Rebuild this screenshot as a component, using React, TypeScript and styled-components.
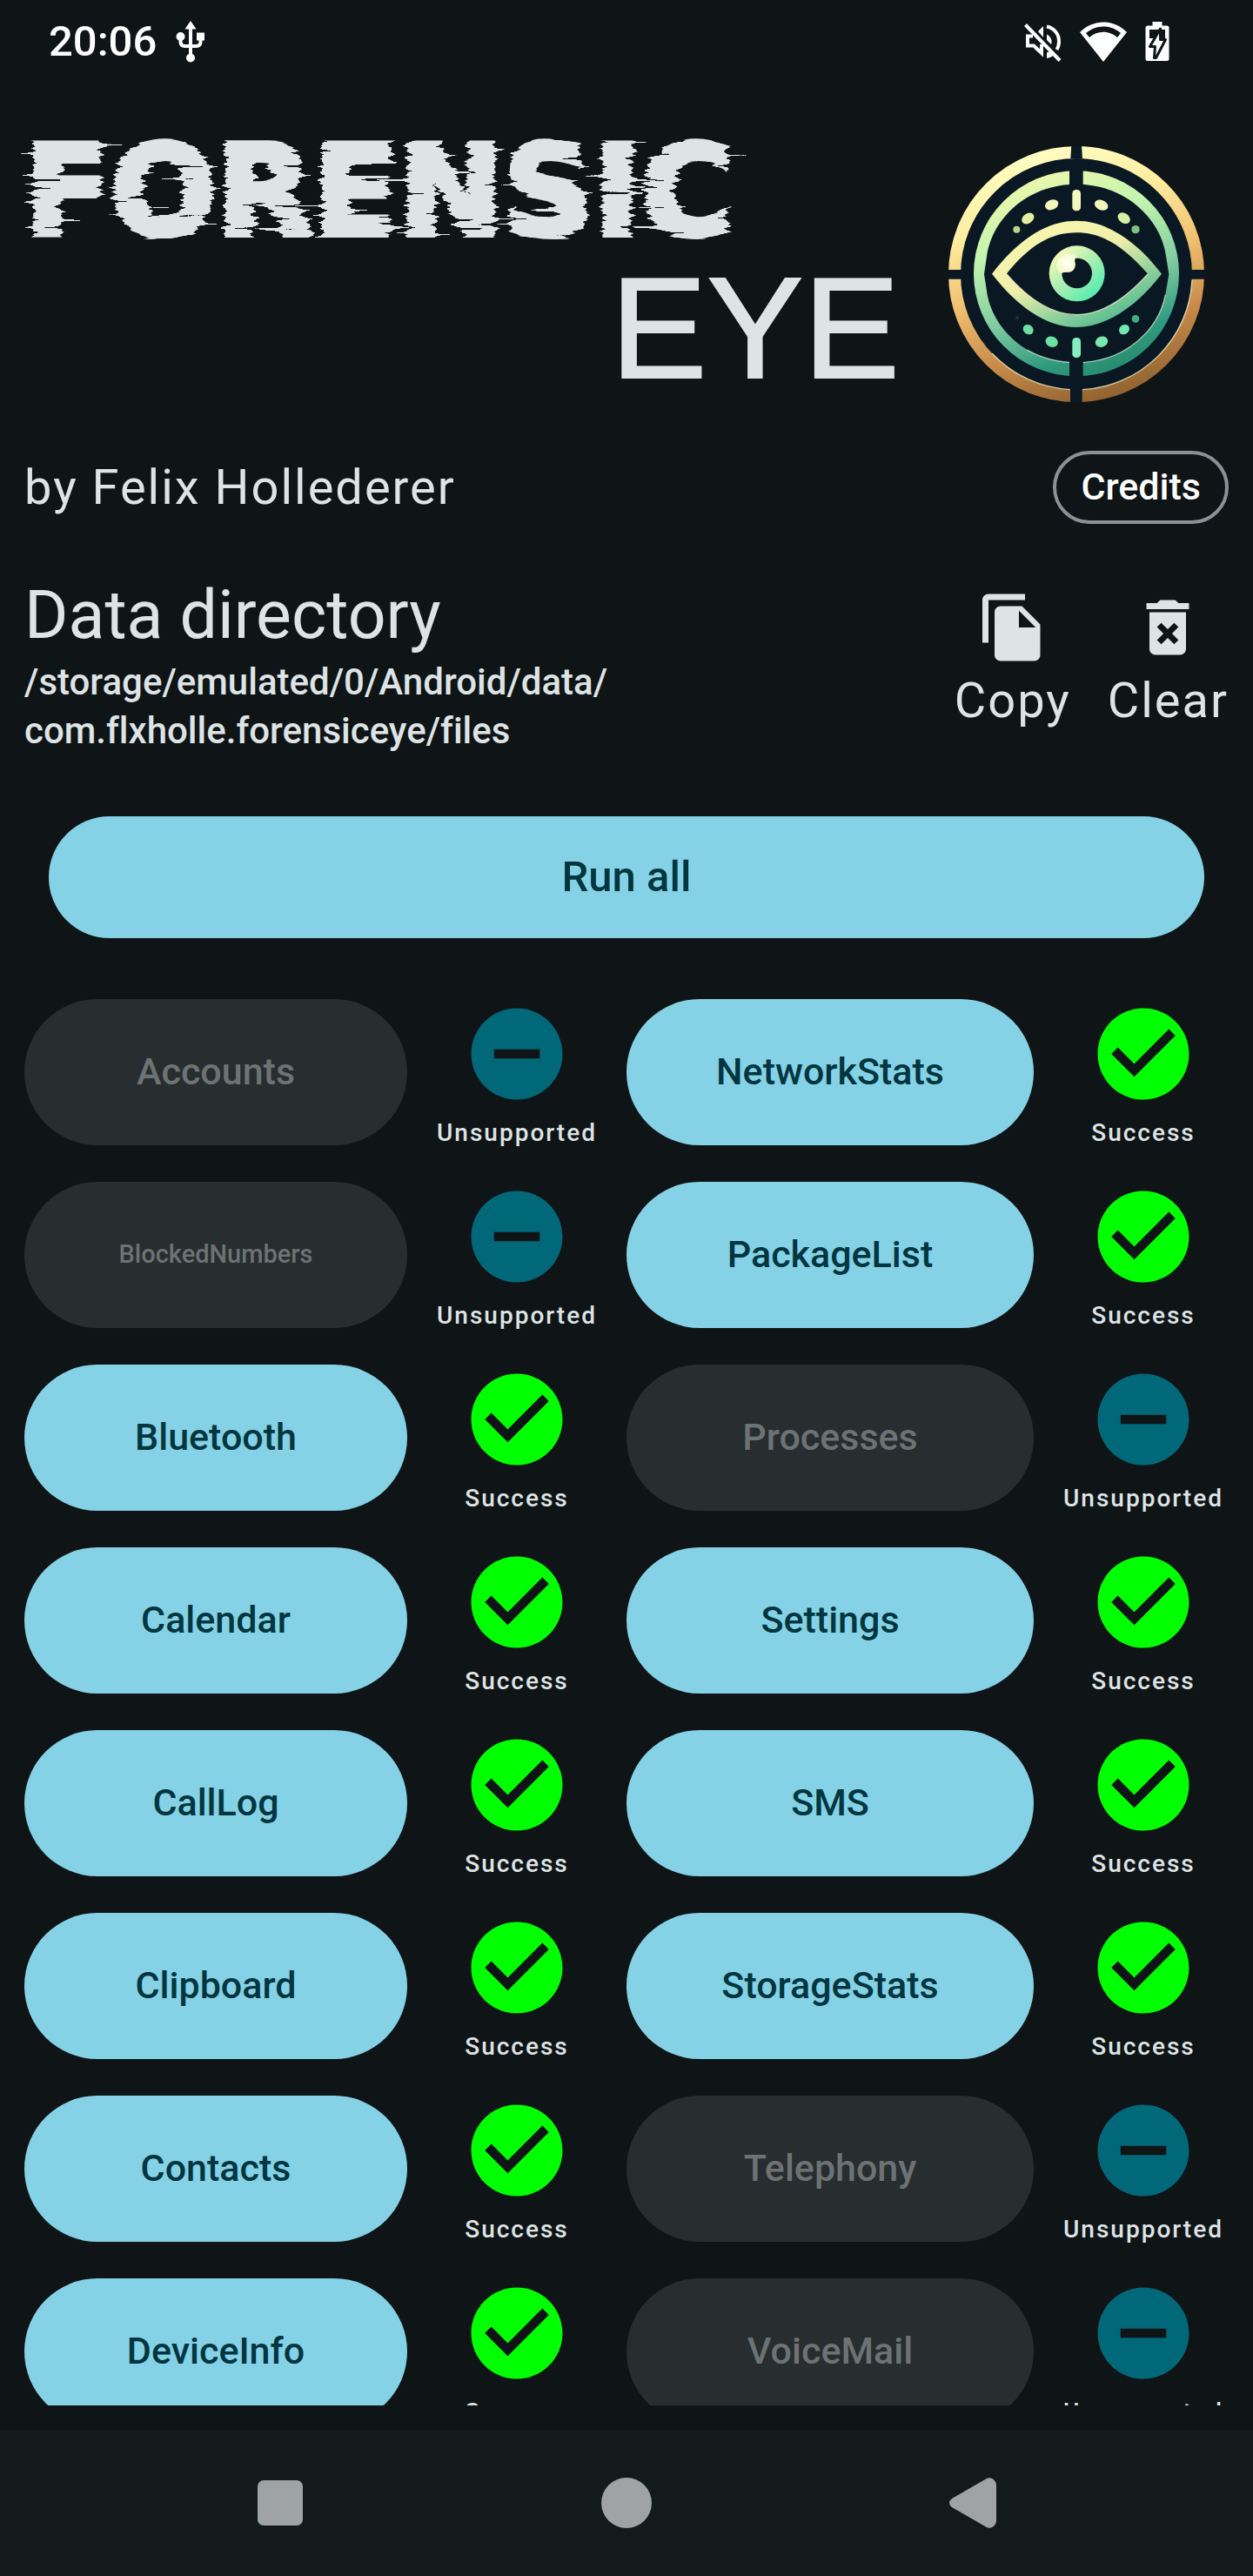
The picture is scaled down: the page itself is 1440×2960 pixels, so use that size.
import React from "react";
import styled, { createGlobalStyle } from "styled-components";

const color = {
  background: "#0f1416",
  navigation: "#121a1b",
  text: "#dee3e5",
  white: "#ffffff",
  outline: "#899295",
  primary: "#85d2e6",
  onPrimary: "#003640",
  disabled: "#282d2f",
  onDisabled: "#6d7274",
  success: "#00ff00",
  unsupported: "#006879",
  navIcon: "#9fa3a3",
};

const GlobalStyle = createGlobalStyle`
  *, *::before, *::after { box-sizing: border-box; }
  body {
    margin: 0;
    background: ${color.background};
    color: ${color.text};
    font-family: Roboto, "Noto Sans", sans-serif;
  }
  button { font: inherit; color: inherit; border: 0; padding: 0; background: none; cursor: pointer; }
  h1, h2, p { margin: 0; font-weight: 400; }
  svg { display: block; }
`;

const Screen = styled.div`
  display: flex;
  flex-direction: column;
  height: 100vh;
  overflow: hidden;
`;

const StatusBar = styled.div`
  flex: none;
  display: flex;
  align-items: center;
  justify-content: space-between;
  height: 96px;
  padding: 0 96px 0 56px;
  color: ${color.white};
`;

const StatusGroup = styled.div`
  display: flex;
  align-items: center;
  gap: 21px;
`;

const Clock = styled.time`
  font-size: 49px;
  font-weight: 500;
  line-height: 56px;
`;

const Main = styled.main`
  flex: 1;
  min-height: 0;
  display: flex;
  flex-direction: column;
  padding: 44px 28px 28px;
`;

const Header = styled.header`
  flex: none;
  display: flex;
`;

const Title = styled.h1`
  flex: 1;
  display: flex;
  flex-direction: column;
`;

const TitleGlitch = styled.span`
  font-family: "DejaVu Sans", sans-serif;
  font-size: 144px;
  font-weight: 700;
  line-height: 160px;
  -webkit-text-stroke: 6px ${color.text};
  filter: url(#glitch);
`;

const TitlePlain = styled.span`
  align-self: flex-end;
  padding-right: 28px;
  font-family: "Liberation Sans", Arial, sans-serif;
  font-size: 166px;
  line-height: 154px;
  -webkit-text-stroke: 2px ${color.text};
`;

const FilterDefs = styled.svg`
  position: absolute;
  width: 0;
  height: 0;
`;

const LogoFrame = styled.div`
  flex: none;
  width: 350px;
  padding: 28px;
`;

const AuthorRow = styled.div`
  flex: none;
  display: flex;
  align-items: center;
  justify-content: space-between;
  margin-top: 28px;
`;

const BodyText = styled.p`
  font-size: 56px;
  line-height: 84px;
  letter-spacing: 2px;
`;

const CreditsButton = styled.button`
  height: 84px;
  padding: 0 28px 2px;
  border: 4px solid ${color.outline};
  border-radius: 42px;
  color: ${color.white};
  font-size: 43px;
  font-weight: 500;
`;

const DirectoryRow = styled.section`
  flex: none;
  display: flex;
  align-items: center;
  justify-content: space-between;
  margin-top: 56px;
`;

const DirectoryTitle = styled.h2`
  font-size: 77px;
  line-height: 98px;
`;

const DirectoryPath = styled.p`
  font-size: 42px;
  font-weight: 500;
  line-height: 56px;
  font-variant-ligatures: none;
`;

const Actions = styled.div`
  display: flex;
  gap: 42px;
`;

const ActionButton = styled.button`
  display: flex;
  flex-direction: column;
  align-items: center;
  font-size: 56px;
  line-height: 84px;
  letter-spacing: 2px;
`;

const RunAllButton = styled.button`
  flex: none;
  height: 140px;
  margin: 70px 28px;
  padding-bottom: 2px;
  border-radius: 70px;
  background: ${color.primary};
  color: ${color.onPrimary};
  font-size: 49px;
  font-weight: 500;
`;

const ModuleScroller = styled.section`
  flex: 1;
  min-height: 0;
  display: grid;
  grid-template-columns: 1fr 1fr;
  align-content: start;
  overflow-y: auto;
  scrollbar-width: none;
`;

const ModuleColumn = styled.div<{ $gutter?: boolean }>`
  display: flex;
  flex-direction: column;
  gap: 28px;
  padding-right: ${(p) => (p.$gutter ? "28px" : "0")};
`;

const ModuleRow = styled.div`
  display: flex;
  align-items: flex-start;
  gap: 28px;
`;

const ModuleButton = styled.button<{ $small?: boolean }>`
  flex: 1;
  height: 168px;
  padding-bottom: 2px;
  border-radius: 84px;
  background: ${color.primary};
  color: ${color.onPrimary};
  font-size: ${(p) => (p.$small ? "29px" : "43px")};
  font-weight: 500;

  &:disabled {
    background: ${color.disabled};
    color: ${color.onDisabled};
    cursor: default;
  }
`;

const ModuleStatus = styled.div`
  flex: none;
  display: flex;
  flex-direction: column;
  align-items: center;
  width: 196px;
  font-size: 28px;
  font-weight: 500;
  line-height: 56px;
  letter-spacing: 2px;
`;

const NavigationBar = styled.nav`
  flex: none;
  display: flex;
  height: 168px;
  padding: 0 123px;
  background: ${color.navigation};
`;

const NavigationButton = styled.button`
  flex: 1;
  display: flex;
  align-items: center;
  justify-content: center;
  color: ${color.navIcon};
`;

type Module = { name: string; supported: boolean; small?: boolean };

const leftModules: Module[] = [
  { name: "Accounts", supported: false },
  { name: "BlockedNumbers", supported: false, small: true },
  { name: "Bluetooth", supported: true },
  { name: "Calendar", supported: true },
  { name: "CallLog", supported: true },
  { name: "Clipboard", supported: true },
  { name: "Contacts", supported: true },
  { name: "DeviceInfo", supported: true },
];

const rightModules: Module[] = [
  { name: "NetworkStats", supported: true },
  { name: "PackageList", supported: true },
  { name: "Processes", supported: false },
  { name: "Settings", supported: true },
  { name: "SMS", supported: true },
  { name: "StorageStats", supported: true },
  { name: "Telephony", supported: false },
  { name: "VoiceMail", supported: false },
];

const SuccessIcon = () => (
  <svg width="126" height="126" viewBox="0 0 24 24" fill={color.success} aria-hidden="true">
    <path d="M12 2C6.48 2 2 6.48 2 12s4.48 10 10 10 10-4.48 10-10S17.52 2 12 2zm-2 15l-5-5 1.41-1.41L10 14.17l7.59-7.59L19 8l-9 9z" />
  </svg>
);

const UnsupportedIcon = () => (
  <svg width="126" height="126" viewBox="0 0 24 24" fill={color.unsupported} aria-hidden="true">
    <path d="M12 2C6.48 2 2 6.48 2 12s4.48 10 10 10 10-4.48 10-10S17.52 2 12 2zm5 11H7v-2h10v2z" />
  </svg>
);

const CopyIcon = () => (
  <svg width="84" height="84" viewBox="0 0 24 24" fill="currentColor" aria-hidden="true">
    <path d="M16 1H4c-1.1 0-2 .9-2 2v14h2V3h12V1zm-1 4l6 6v10c0 1.1-.9 2-2 2H7.99C6.89 23 6 22.1 6 21l.01-14c0-1.1.89-2 1.99-2h7zm-1 7h5.5L14 6.5V12z" />
  </svg>
);

const ClearIcon = () => (
  <svg width="84" height="84" viewBox="0 0 24 24" fill="currentColor" aria-hidden="true">
    <path d="M6 19c0 1.1.9 2 2 2h8c1.1 0 2-.9 2-2V7H6v12zm2.46-7.12l1.41-1.41L12 12.59l2.12-2.12 1.41 1.41L13.41 14l2.12 2.12-1.41 1.41L12 15.41l-2.12 2.12-1.41-1.41L10.59 14l-2.13-2.12zM15.5 4l-1-1h-5l-1 1H5v2h14V4z" />
  </svg>
);

const UsbIcon = () => (
  <svg width="36" height="48" viewBox="0 0 36 48" aria-hidden="true">
    <g fill="none" stroke="currentColor" strokeWidth="4">
      <path d="M18 8V42" />
      <path d="M6.500 19V24Q6.500 29 11.500 29H24.500Q29.500 29 29.500 24V20" />
    </g>
    <g fill="currentColor">
      <path d="M18 0L24.500 9.500H11.500z" />
      <circle cx="6.500" cy="18" r="5" />
      <rect x="25" y="13.500" width="9" height="9" />
      <circle cx="18" cy="42.500" r="5" />
    </g>
  </svg>
);

const MuteIcon = () => (
  <svg width="44" height="48" viewBox="0 0 44 48" aria-hidden="true">
    <g fill="none" stroke="currentColor" strokeWidth="4">
      <path d="M11 17.500H5V28.500H12L21 37V27" />
      <path d="M27 6.500C36.500 8.500 41.500 16 41 25C40.700 28.500 39.800 31 38.500 33" />
      <path d="M2.500 4.500L42 45.500" />
    </g>
    <g fill="currentColor">
      <path d="M23 6v13l-6-7z" />
      <path d="M27 15.500C32 18 33.500 23 32 27L27 22z" />
      <path d="M27 36.500L30 35L35 39.500Q31 42.500 27 43z" />
    </g>
  </svg>
);

const WifiIcon = () => (
  <svg width="54" height="48" viewBox="0 0 54 48" aria-hidden="true">
    <path
      fill="currentColor"
      fillRule="evenodd"
      d="M27 47L0 13C15-2.500 39-2.500 54 13zM27 6.500C19 6.500 12.500 9.500 7 14L11 19C20 10.500 34 10.500 43 19L47 14C41.500 9.500 35 6.500 27 6.500z"
    />
  </svg>
);

const BatteryIcon = () => (
  <svg width="28" height="48" viewBox="0 0 28 48" aria-hidden="true">
    <path
      fill="currentColor"
      d="M8.500 1H19.500V5.500H25Q27.500 5.500 27.500 8V43.500Q27.500 46 25 46H3Q.5 46 .5 43.500V8Q.5 5.500 3 5.500H8.500z"
    />
    <path fill={color.background} d="M5 10H23V20H5z" />
    <path
      fill="currentColor"
      stroke={color.background}
      strokeWidth="3"
      strokeLinejoin="round"
      d="M17.500 9L5.500 29.500H11.500L10.500 42.500H12.500L23.500 21.500H17.500z"
    />
  </svg>
);

const EyeLogo = () => (
  <svg width="294" height="294" viewBox="90 83 882 882" role="img" aria-label="Forensic Eye logo">
    <defs>
      <linearGradient id="gold" gradientUnits="userSpaceOnUse" x1="380" y1="90" x2="640" y2="960">
        <stop offset="0" stopColor="#ffffc4" />
        <stop offset="0.25" stopColor="#ffeda0" />
        <stop offset="0.5" stopColor="#f0c070" />
        <stop offset="0.75" stopColor="#c88b4a" />
        <stop offset="1" stopColor="#8f6230" />
      </linearGradient>
      <linearGradient id="mint" gradientUnits="userSpaceOnUse" x1="400" y1="170" x2="660" y2="870">
        <stop offset="0" stopColor="#eef7ac" />
        <stop offset="0.3" stopColor="#c0f4ae" />
        <stop offset="0.6" stopColor="#80cca0" />
        <stop offset="0.85" stopColor="#329a80" />
        <stop offset="1" stopColor="#258a6c" />
      </linearGradient>
      <linearGradient id="lid" gradientUnits="userSpaceOnUse" x1="430" y1="340" x2="620" y2="720">
        <stop offset="0" stopColor="#f6f6ae" />
        <stop offset="0.4" stopColor="#efefaa" />
        <stop offset="0.75" stopColor="#8ad09a" />
        <stop offset="1" stopColor="#50b890" />
      </linearGradient>
      <linearGradient id="iris" gradientUnits="userSpaceOnUse" x1="460" y1="440" x2="600" y2="610">
        <stop offset="0" stopColor="#fbfbb8" />
        <stop offset="0.5" stopColor="#a6eeb0" />
        <stop offset="1" stopColor="#4cecb2" />
      </linearGradient>
      <radialGradient id="glint">
        <stop offset="0" stopColor="#ffffff" />
        <stop offset="1" stopColor="#f6fbc4" />
      </radialGradient>
    </defs>
    <circle cx="531" cy="524" r="441" fill="#0a1824" />
    <circle cx="531" cy="524" r="420" fill="none" stroke="url(#gold)" strokeWidth="42" />
    <path fill="none" stroke="#fdf0c0" strokeWidth="4" opacity="0.8" d="M930 545A399 399 0 0 1 551 922M509 922A399 399 0 0 1 240 797" />
    <path fill="#0a1824" d="M514 80H549L552 125H511zM510 918H551V968H510zM88 509H136V541H88zM926 509H974V541H926z" />
    <circle cx="531" cy="522" r="354" fill="url(#mint)" />
    <path fill="#0a1824" d="M531 214C700 214 815 330 838 450L850 524L838 595C815 715 700 829 531 829C362 829 247 715 224 595L213 524L224 450C247 330 362 214 531 214z" />
    <path fill="none" stroke="#d8f5d8" strokeWidth="4" opacity="0.7" d="M838 595C815 715 700 829 531 829C470 829 410 812 362 786" />
    <path fill="#0a1824" d="M507 160H554V222H507zM507 822H554V880H507z" />
    <g fill="#f2f7bc">
      <rect x="517" y="233" width="29" height="73" rx="13" />
      <ellipse cx="446" cy="285" rx="24" ry="17" transform="rotate(-22 446 285)" />
      <ellipse cx="617" cy="286" rx="24" ry="17" transform="rotate(22 617 286)" />
      <ellipse cx="364" cy="332" rx="23" ry="17" transform="rotate(-36 364 332)" fill="#e4f0a0" />
      <ellipse cx="695" cy="331" rx="23" ry="17" transform="rotate(36 695 331)" fill="#d6f2a6" />
      <circle cx="325" cy="370" r="12" fill="#b4d880" />
      <circle cx="735" cy="370" r="14" fill="#7cc484" />
    </g>
    <g fill="#6ee0a4">
      <rect x="517" y="743" width="29" height="69" rx="13" fill="#84f0c0" />
      <ellipse cx="446" cy="757" rx="22" ry="18" transform="rotate(22 446 757)" />
      <ellipse cx="618" cy="757" rx="22" ry="18" transform="rotate(-22 618 757)" fill="#78eab0" />
      <ellipse cx="365" cy="715" rx="19" ry="16" transform="rotate(36 365 715)" />
      <ellipse cx="696" cy="715" rx="19" ry="16" transform="rotate(-36 696 715)" fill="#70e8b4" />
      <circle cx="735" cy="678" r="13" fill="#3fae80" />
      <circle cx="327" cy="675" r="6" fill="#143c34" />
    </g>
    <path
      fill="url(#lid)"
      fillRule="evenodd"
      d="M240 523C330 405 430 340 531 340S735 405 825 523C735 640 630 707 531 707S330 640 240 523zM290 523C370 615 450 664 531 664S695 615 778 523C690 425 620 381 531 381S370 425 290 523z"
    />
    <path fill="none" stroke="#fbf7d8" strokeWidth="4" opacity="0.8" d="M290 523C370 615 450 664 531 664S695 615 778 523" />
    <circle cx="533" cy="522" r="96" fill="url(#iris)" />
    <circle cx="533" cy="521" r="52" fill="#0a1824" />
    <path fill="url(#glint)" d="M532 462Q522 476 528 490Q526 518 498 518Q488 516 478 522Q450 500 472 468Q500 440 532 462z" />
  </svg>
);

const GlitchFilter = () => (
  <FilterDefs aria-hidden="true">
    <filter id="glitch" x="-5%" y="0" width="110%" height="100%" colorInterpolationFilters="sRGB">
      <feTurbulence type="fractalNoise" baseFrequency="0.009 0.2" numOctaves="2" seed="7" />
      <feColorMatrix values="1 0 0 0 0  0 0 0 0 0.5  0 0 0 0 0.5  0 0 0 0 1" />
      <feComponentTransfer result="shift">
        <feFuncR type="table" tableValues="0 0 0.1 0.42 0.47 0.5 0.53 0.58 0.9 1 1" />
      </feComponentTransfer>
      <feDisplacementMap in="SourceGraphic" in2="shift" scale="72" xChannelSelector="R" yChannelSelector="G" />
    </filter>
  </FilterDefs>
);

const ModuleList = ({ modules, gutter }: { modules: Module[]; gutter?: boolean }) => (
  <ModuleColumn $gutter={gutter}>
    {modules.map(({ name, supported, small }) => (
      <ModuleRow key={name}>
        <ModuleButton type="button" disabled={!supported} $small={small}>
          {name}
        </ModuleButton>
        <ModuleStatus>
          {supported ? <SuccessIcon /> : <UnsupportedIcon />}
          <span>{supported ? "Success" : "Unsupported"}</span>
        </ModuleStatus>
      </ModuleRow>
    ))}
  </ModuleColumn>
);

export default function App() {
  return (
    <Screen>
      <GlobalStyle />
      <GlitchFilter />
      <StatusBar>
        <StatusGroup>
          <Clock>20:06</Clock>
          <UsbIcon />
        </StatusGroup>
        <StatusGroup>
          <MuteIcon />
          <WifiIcon />
          <BatteryIcon />
        </StatusGroup>
      </StatusBar>
      <Main>
        <Header>
          <Title>
            <TitleGlitch>FORENSIC</TitleGlitch>
            <TitlePlain>EYE</TitlePlain>
          </Title>
          <LogoFrame>
            <EyeLogo />
          </LogoFrame>
        </Header>
        <AuthorRow>
          <BodyText>by Felix Hollederer</BodyText>
          <CreditsButton type="button">Credits</CreditsButton>
        </AuthorRow>
        <DirectoryRow>
          <div>
            <DirectoryTitle>Data directory</DirectoryTitle>
            <DirectoryPath>
              /storage/emulated/0/Android/data/
              <br />
              com.flxholle.forensiceye/files
            </DirectoryPath>
          </div>
          <Actions>
            <ActionButton type="button">
              <CopyIcon />
              Copy
            </ActionButton>
            <ActionButton type="button">
              <ClearIcon />
              Clear
            </ActionButton>
          </Actions>
        </DirectoryRow>
        <RunAllButton type="button">Run all</RunAllButton>
        <ModuleScroller aria-label="Modules">
          <ModuleList modules={leftModules} gutter />
          <ModuleList modules={rightModules} />
        </ModuleScroller>
      </Main>
      <NavigationBar aria-label="System navigation">
        <NavigationButton type="button" aria-label="Recent apps">
          <svg width="54" height="54" viewBox="0 0 54 54" fill="currentColor" aria-hidden="true">
            <rect x="1" y="1" width="52" height="52" rx="7" />
          </svg>
        </NavigationButton>
        <NavigationButton type="button" aria-label="Home">
          <svg width="58" height="58" viewBox="0 0 58 58" fill="currentColor" aria-hidden="true">
            <circle cx="29" cy="29" r="29" />
          </svg>
        </NavigationButton>
        <NavigationButton type="button" aria-label="Back">
          <svg width="54" height="58" viewBox="0 0 54 58" fill="currentColor" aria-hidden="true">
            <path d="M3 24L42 1.500Q46 -1 50 1.500Q54 4 54 9V49Q54 54 50 56.500Q46 59 42 56.500L3 34Q-3 29 3 24z" />
          </svg>
        </NavigationButton>
      </NavigationBar>
    </Screen>
  );
}
